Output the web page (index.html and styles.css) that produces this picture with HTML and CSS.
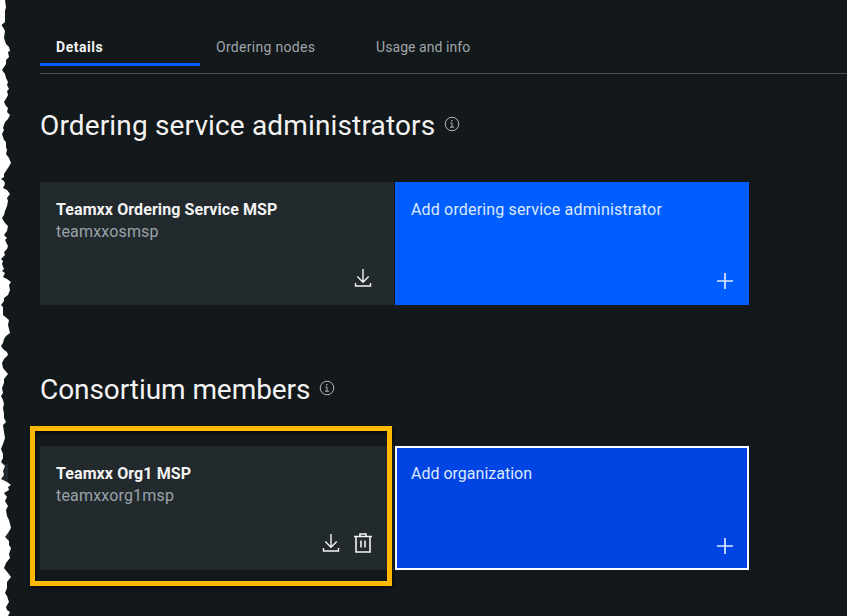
FILE: index.html
```html
<!DOCTYPE html>
<html lang="en">
<head>
<meta charset="utf-8">
<title>Ordering service</title>
<link rel="stylesheet" href="styles.css">
</head>
<body>
<svg class="symbols" width="0" height="0" aria-hidden="true">
  <symbol id="info" viewBox="0 0 16 16"><circle cx="8" cy="8" r="6.8" fill="none" stroke="currentColor"/><path d="M6.5 7H8v4M6 11.2h4" fill="none" stroke="currentColor"/><circle cx="7.8" cy="4.7" r=".8" fill="currentColor"/></symbol>
  <symbol id="download" viewBox="0 0 20 20"><path d="M10 1v13M4.3 8.6 10 14.3l5.700-5.700M2.500 15v3h15v-3" fill="none" stroke="currentColor" stroke-width="1.400"/></symbol>
  <symbol id="trash" viewBox="0 0 20 22"><path d="M1 4.500h18M3 4.500V20h14V4.500M7 4V2h6v2M8 8.500v7M12 8.500v7" fill="none" stroke="currentColor" stroke-width="1.600"/></symbol>
  <symbol id="plus" viewBox="0 0 16 16"><path d="M8 0v16M0 8h16" stroke="currentColor" stroke-width="1.700"/></symbol>
</svg>
<main class="page">
  <nav class="tabs">
    <a class="tab active"><span>Details</span></a>
    <a class="tab nodes"><span>Ordering nodes</span></a>
    <a class="tab usage"><span>Usage and info</span></a>
  </nav>
  <section class="section">
    <h2 class="admins"><span>Ordering service administrators</span><svg class="info"><use href="#info"/></svg></h2>
    <div class="cards">
      <article class="card">
        <h3 class="os-name">Teamxx Ordering Service MSP</h3>
        <p class="os-id">teamxxosmsp</p>
        <div class="actions"><svg class="download"><use href="#download"/></svg></div>
      </article>
      <article class="card add">
        <p class="add-admin">Add ordering service administrator</p>
        <svg class="plus"><use href="#plus"/></svg>
      </article>
    </div>
  </section>
  <section class="section members">
    <h2 class="consortium"><span>Consortium members</span><svg class="info"><use href="#info"/></svg></h2>
    <div class="cards">
      <article class="card">
        <h3 class="org-name">Teamxx Org1 MSP</h3>
        <p class="org-id">teamxxorg1msp</p>
        <div class="actions"><svg class="download"><use href="#download"/></svg><svg class="trash"><use href="#trash"/></svg></div>
        <div class="highlight"></div>
      </article>
      <article class="card add focused">
        <p class="add-org">Add organization</p>
        <svg class="plus"><use href="#plus"/></svg>
      </article>
    </div>
  </section>
</main>
<svg class="torn" width="14" height="616" viewBox="0 0 14 616">
  <path fill="#20292d" d="M0 464h8v20H0zM0 520h9v20H0z"/>
  <path fill="#fff" d="M0 0H5L6 7 5 11V22L1.500 25 4 29 5 31 4 38 6 44 9 47 10 51 8 52 9 57 6 60 6 64 2 70 5 74 6 78 8 82 7 85 9 89 7 91 8 95 7 97 4 102 6 106 8 108 7 112 10 115 8 119 5 122 4 125 3 128 4 130 2 134 4 140 6 142 6 147 7 150 6 154 9 158 11 163 8 168 6 171 4 174 4 177 1 179 4 181 5 184 3 188 7 190 10 194 7 198 8 201 7 206 5 211 4 215 2 218 5 223 8 226 7 231 4 235 7 238 5 240 8 246 7 249 4 252 5 255 1 259 3 261 2 264 4 269 2 271 5 273 3 277 7 279 11 282 9 285 10 290 8 295 4 298 4 301 1 305 3 307 3 315 9 320 8 325 10 333 6 336 4 339 3 343 1 346 3 349 7 352 8 355 4 359 2 363 3 368 8 374 4 379 4 383 2 388 3 393 1 396 3 400 4 404 3 408 4 414 4 418 6 422 3 425 4 432 5 438 3 444 1 449 3 454 3 458 1 462 5 466 3 471 4 475 1 479 7 482 11 485 8 487 9 490 4 493 7 497 5 501 8 506 6 510 7 516 9 520 11 528 8 533 5 537 9 541 9 545 11 548 9 554 10 558 6 563 4 568 8 573 11 577 7 582 7 588 5 593 7 596 9 602 6 607 7 610 10 612 8 616H0z"/>
</svg>
</body>
</html>
```
FILE: styles.css
```css
* { box-sizing: border-box; }
body {
  margin: 0;
  height: 616px;
  overflow: hidden;
  background: #13181a;
  color: #f3f3f3;
  font-family: Roboto, "Liberation Sans", sans-serif;
}
h2, h3, p { margin: 0; font-weight: 400; white-space: nowrap; }
svg { display: block; flex: none; }
.symbols { position: absolute; }
.torn { position: absolute; left: 0; top: 0; }
.page { padding: 28px 0 0 40px; }
.tabs { display: flex; height: 46px; border-bottom: 1px solid #4b5054; }
.tab {
  width: 160px;
  height: 38px;
  padding-left: 16px;
  font-size: 14px;
  line-height: 38px;
  color: #9ea5ac;
  white-space: nowrap;
}
.tab.active { color: #f3f3f3; font-weight: 700; letter-spacing: .55px; border-bottom: 3px solid #005eff; }
.nodes { letter-spacing: .3px; }
.usage { letter-spacing: .07px; }
.section { padding-top: 32px; }
.members { padding-top: 65px; }
h2 { display: flex; height: 38px; font-size: 28px; line-height: 40px; }
h2 span { flex: none; }
.admins span { width: 395px; letter-spacing: .15px; }
.consortium span { width: 270px; letter-spacing: -.07px; }
.info { width: 16px; height: 16px; margin: 10px 0 0 9px; color: #b4b9bd; }
.cards { display: flex; gap: 1px; margin-top: 38px; }
.card {
  position: relative;
  display: flex;
  flex-direction: column;
  width: 354px;
  height: 123px;
  padding: 17px 16px 16px;
  background: #232a2d;
  font-size: 16px;
  line-height: 22px;
}
.members .card { height: 124px; }
.card h3 { font-size: 16px; font-weight: 700; letter-spacing: .09px; }
.os-id, .org-id { color: #9aa2aa; letter-spacing: .17px; }
.add-admin { letter-spacing: .16px; }
.actions { display: flex; gap: 12px; justify-content: flex-end; margin: auto 5px 0 0; }
.download { width: 20px; height: 20px; }
.section:not(.members) .download { margin: -1px 0 1px; }
.trash { width: 20px; height: 22px; margin-top: -1px; }
.add { background: #005eff; color: #dce9ff; }
.members .focused { background: #0044e3; border: 2px solid #fff; padding: 15px 14px 14px; }
.plus { width: 16px; height: 16px; margin: auto 0 0 auto; }
.highlight {
  position: absolute;
  z-index: 1;
  left: -10px;
  top: -20px;
  width: 362px;
  height: 160px;
  border: 5px solid #ffb900;
  box-shadow: 1px 2px 3px #0009, inset 1px 2px 3px #0009;
}
```
